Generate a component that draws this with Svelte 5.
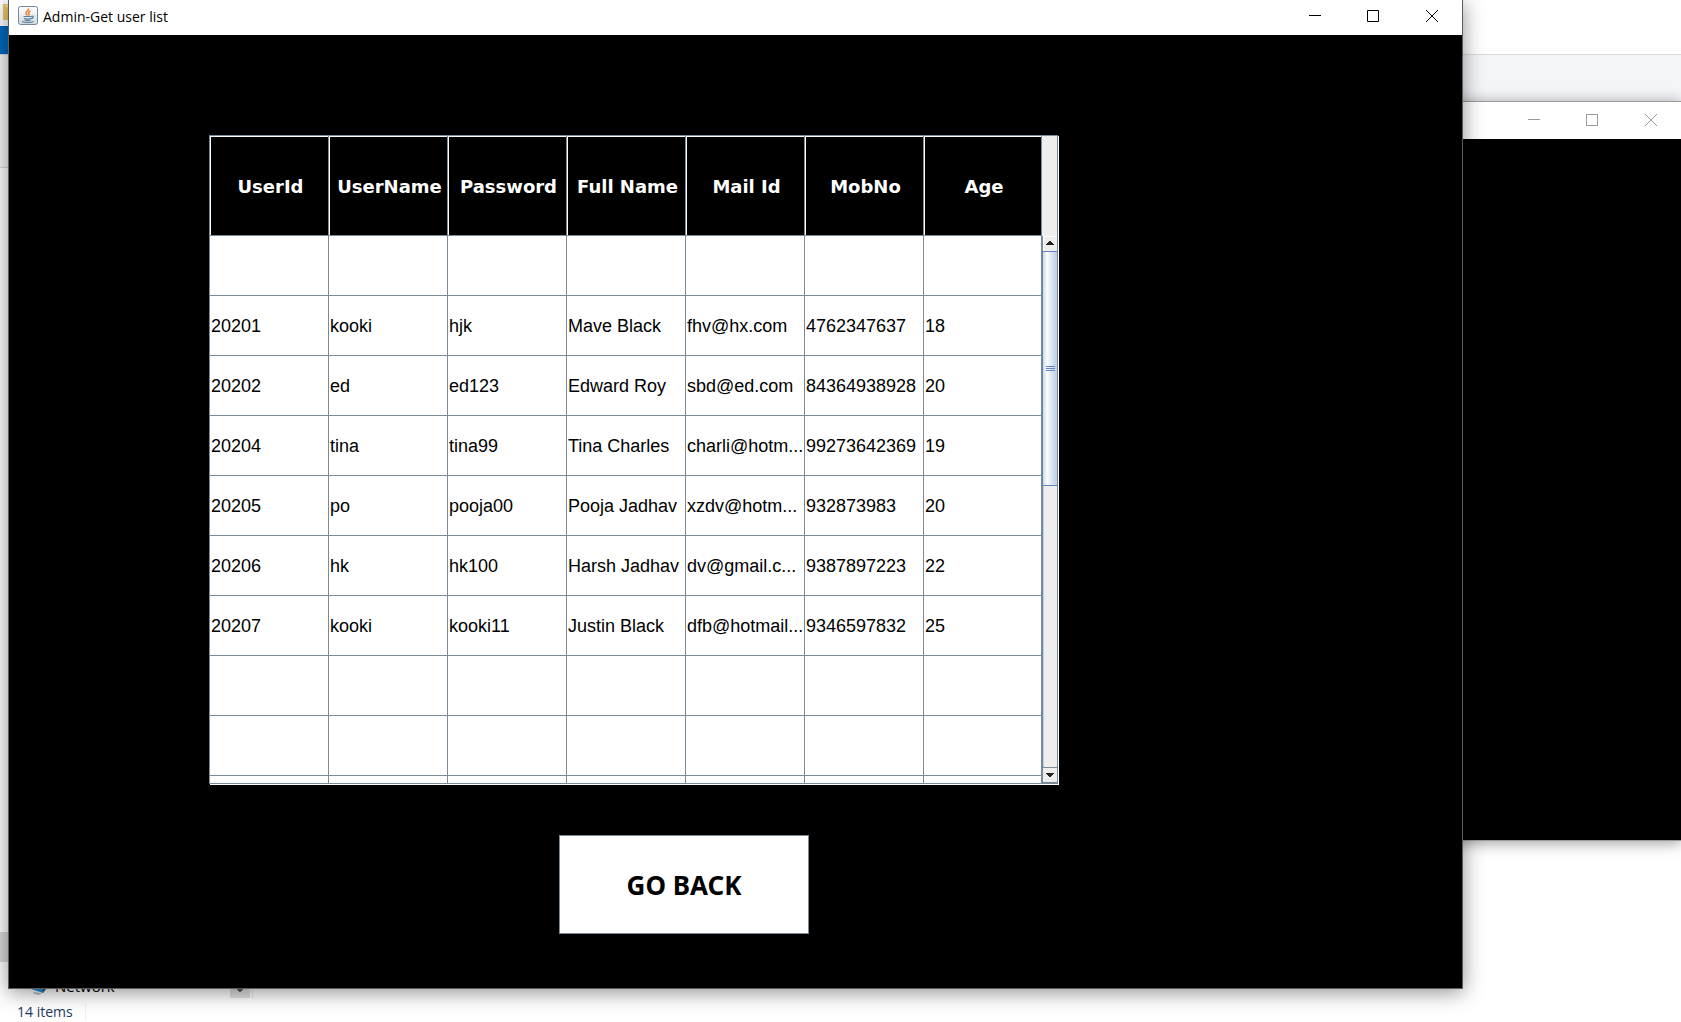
<script>
  const columns = ['UserId', 'UserName', 'Password', 'Full Name', 'Mail Id', 'MobNo', 'Age'];
  const blank = ['', '', '', '', '', '', ''];
  const rows = [
    blank,
    ['20201', 'kooki', 'hjk', 'Mave Black', 'fhv@hx.com', '4762347637', '18'],
    ['20202', 'ed', 'ed123', 'Edward Roy', 'sbd@ed.com', '84364938928', '20'],
    ['20204', 'tina', 'tina99', 'Tina Charles', 'charli@hotm...', '99273642369', '19'],
    ['20205', 'po', 'pooja00', 'Pooja Jadhav', 'xzdv@hotm...', '932873983', '20'],
    ['20206', 'hk', 'hk100', 'Harsh Jadhav', 'dv@gmail.c...', '9387897223', '22'],
    ['20207', 'kooki', 'kooki11', 'Justin Black', 'dfb@hotmail...', '9346597832', '25'],
    blank,
    blank,
    blank
  ];
</script>

{#snippet windowControls()}
  <div class="controls">
    <button type="button" aria-label="Minimize">
      <svg width="12" height="12" viewBox="0 0 12 12"><path d="M0 5.5h12" /></svg>
    </button>
    <button type="button" aria-label="Maximize">
      <svg width="12" height="12" viewBox="0 0 12 12"><path d="M.5 .5h11v11h-11z" /></svg>
    </button>
    <button type="button" class="close" aria-label="Close">
      <svg width="12" height="12" viewBox="0 0 12 12"><path d="M0 0l12 12M12 0L0 12" /></svg>
    </button>
  </div>
{/snippet}

<div class="desktop">
  <!-- File explorer behind the two application windows -->
  <div class="explorer">
    <div class="caption">
      <svg class="folder" width="16" height="18" viewBox="0 0 16 18">
        <path d="M0 1h6v16H0z" fill="#e8c766" /><path d="M2 2h14v13l-11 2V5z" fill="#f8e3a0" />
      </svg>
    </div>
    <div class="tabs"><span class="file-tab"></span></div>
    <div class="ribbon"><div class="ribbon-left"></div><div class="ribbon-right"></div></div>
    <div class="tree">
      <div class="selected"></div>
      <div class="network">
        <svg width="18" height="18" viewBox="0 0 18 18">
          <path d="M1 1l15 2v8l-3 5L1 12z" fill="#2b8fd8" /><path d="M12 4h4v8l-3 4z" fill="#3d5c73" />
          <path d="M3 15l9 1-3 2-5-1z" fill="#b9bec3" />
        </svg>
        <span>Network</span>
        <span class="scroll-end">
          <svg width="10" height="6" viewBox="0 0 10 6"><path d="M0 0l5 5 5-5" fill="none" stroke="#505050" stroke-width="2" /></svg>
        </span>
      </div>
    </div>
    <div class="status"><span>14 items</span></div>
  </div>

  <section class="window rear" aria-label="Background window">
    <header class="titlebar">{@render windowControls()}</header>
    <div class="rear-body"></div>
  </section>

  <main class="window front">
    <header class="titlebar">
      <svg class="java" width="20" height="19" viewBox="0 0 20 19">
        <defs>
          <linearGradient id="tile" x1="0" y1="0" x2="0" y2="1">
            <stop offset="0" stop-color="#fff" /><stop offset="1" stop-color="#d3d8dd" />
          </linearGradient>
        </defs>
        <rect x=".5" y=".5" width="19" height="18" rx="2" fill="url(#tile)" stroke="#7389a0" />
        <path d="M10.5 2.5c1 2-3.5 2.7-2.5 5 .3.8 1 1.300 1.500 2M12.500 5c-2 .8-2.500 1.700-1.600 2.700.5.700.3 1.300-.4 1.800" fill="none" stroke="#e8833a" stroke-width="1.5" />
        <path d="M5.500 10.500h8M6 12.300c2 .8 5.500.8 7.500 0M6.500 14c2 .6 4.500.6 6 0M13.500 10.300c2.500-.6 2.200 2-.5 2.600M4 15.500c2.500 1.300 9 1.300 11.500 0" fill="none" stroke="#5b82a3" stroke-width="1.2" />
      </svg>
      <h1>Admin-Get user list</h1>
      {@render windowControls()}
    </header>

    <div class="content">
      <div class="scroll-pane">
        <div class="viewport">
          <table>
            <thead>
              <tr>{#each columns as name}<th scope="col">{name}</th>{/each}</tr>
            </thead>
            <tbody>
              {#each rows as row}
                <tr>{#each row as cell}<td>{cell}</td>{/each}</tr>
              {/each}
            </tbody>
          </table>
        </div>
        <div class="side">
          <div class="corner"></div>
          <div class="scrollbar">
            <button type="button" class="arrow up" aria-label="Scroll up">
              <svg width="8" height="4" viewBox="0 0 8 4" shape-rendering="crispEdges"><path d="M3 0h2v1h1v1h1v1h1v1H0V3h1V2h1V1h1z" /></svg>
            </button>
            <div class="thumb"><i></i><i></i><i></i></div>
            <div class="track"></div>
            <button type="button" class="arrow down" aria-label="Scroll down">
              <svg width="8" height="4" viewBox="0 0 8 4" shape-rendering="crispEdges"><path d="M0 0h8v1H7v1H6v1H5v1H3V3H2V2H1V1H0z" /></svg>
            </button>
          </div>
        </div>
      </div>
      <button type="button" class="go-back">GO BACK</button>
    </div>
  </main>
</div>

<style>
  :global(body) {
    margin: 0;
  }

  .desktop,
  .desktop * {
    box-sizing: border-box;
  }

  .desktop {
    position: relative;
    min-height: 100vh;
    overflow: hidden;
    background: #fff;
    color: #000;
    font-family: 'Open Sans', 'Noto Sans', sans-serif;
  }

  button {
    margin: 0;
    padding: 0;
    border: 0;
    background: none;
    font: inherit;
    color: inherit;
  }

  svg {
    display: block;
    flex: none;
  }

  /* File explorer */
  .explorer {
    display: flex;
    flex-direction: column;
    min-height: 100vh;
  }

  .caption {
    height: 26px;
    padding: 3px;
  }

  .tabs {
    height: 29px;
    border-bottom: 1px solid #d9dbde;
  }

  .file-tab {
    display: block;
    width: 60px;
    height: 28px;
    background: #0069bd;
  }

  .ribbon {
    display: grid;
    grid-template-columns: 1fr 1fr;
    height: 113px;
    border-bottom: 1px solid #d5d7da;
  }

  .ribbon-left {
    background: #f4f5f8;
  }

  .ribbon-right {
    background: #f4f5f8;
  }

  .tree {
    flex: 1;
    display: flex;
    flex-direction: column;
    justify-content: flex-end;
  }

  .selected {
    width: 200px;
    height: 30px;
    background: #d9d9d9;
  }

  .network {
    display: flex;
    align-items: center;
    width: 253px;
    height: 36px;
    padding-left: 30px;
    gap: 7px;
    border-right: 1px solid #ececec;
    font-size: 15px;
    line-height: 20px;
  }

  .network > svg,
  .network > span {
    margin-top: 12px;
  }

  .network > .scroll-end {
    display: flex;
    align-items: flex-end;
    justify-content: center;
    align-self: stretch;
    width: 20px;
    margin: 0 2px 0 auto;
    padding-bottom: 6px;
    background: #e2e2e2;
  }

  .status {
    display: flex;
    height: 24px;
    padding: 5px 17px 1px;
    color: #1e395b;
    font-size: 14px;
    line-height: 18px;
  }

  .status span {
    padding-right: 12px;
    border-right: 1px solid #f0f0f0;
  }

  /* Application windows */
  .window {
    position: absolute;
    display: flex;
    flex-direction: column;
  }

  .rear {
    inset: 101px 0 181px 50%;
    border: 1px solid #9b9b9b;
    border-right: 0;
    box-shadow: 0 2px 14px rgba(0, 0, 0, 0.4);
    color: #999;
  }

  .rear .titlebar {
    height: 37px;
  }

  .rear-body {
    flex: 1;
    background: #000;
  }

  .front {
    inset: 0 218px 33px 8px;
    border: 1px solid #5c5c5c;
    border-top: 0;
    box-shadow: 0 3px 20px rgba(0, 0, 0, 0.45);
  }

  .titlebar {
    display: flex;
    align-items: center;
    height: 35px;
    padding-left: 9px;
    background: #fff;
  }

  .java {
    margin-bottom: 4px;
  }

  h1 {
    margin: 0 0 2px 5px;
    font-size: 14px;
    line-height: 20px;
    font-weight: 400;
  }

  .controls {
    display: flex;
    align-self: stretch;
    margin-left: auto;
    padding-bottom: 3px;
  }

  .rear .controls {
    padding-bottom: 1px;
  }

  .controls button {
    display: grid;
    place-items: center;
    width: 58px;
  }

  .controls .close {
    width: 60px;
  }

  .controls path {
    fill: none;
    stroke: currentColor;
  }

  .content {
    flex: 1;
    display: flex;
    flex-direction: column;
    align-items: flex-start;
    gap: 50px;
    padding: 100px 0 54px 200px;
    background: #000;
  }

  /* User table */
  .scroll-pane {
    display: grid;
    grid-template-columns: 832px 15px;
    height: 649px;
    margin: 0 1px 1px 0;
    border: 1px solid #7a8a99;
    background: #fff;
    box-shadow: 1px 1px 0 #fff;
  }

  .viewport {
    overflow: hidden;
  }

  table {
    width: 100%;
    table-layout: fixed;
    border-collapse: separate;
    border-spacing: 0;
  }

  th,
  td {
    border: 0 solid #7a8a99;
    border-width: 0 1px 1px 0;
    white-space: nowrap;
  }

  th:not(:last-child) {
    width: 119px;
  }

  th {
    height: 100px;
    padding: 3px 0 0 3px;
    background: #000;
    box-shadow: inset 1px 1px 0 #fff;
    color: #fff;
    font: bold 18px/24px 'DejaVu Sans', sans-serif;
    text-align: center;
  }

  td {
    height: 60px;
    padding: 0 0 0 1px;
    background: #fff;
    font: 18px/20px 'Liberation Sans', Arial, sans-serif;
  }

  .side {
    display: flex;
    flex-direction: column;
    min-height: 0;
  }

  .corner {
    height: 100px;
    background: #eee;
  }

  .scrollbar {
    flex: 1;
    display: flex;
    flex-direction: column;
    border-left: 1px solid #7a8a99;
    background: #eee;
  }

  .arrow {
    display: grid;
    place-items: center;
    height: 15px;
    border: 1px solid #fff;
    border-width: 1px 0 0 1px;
    background: #eee;
    fill: #222;
  }

  .up {
    padding: 0 1px 2px 0;
  }

  .thumb {
    display: flex;
    flex-direction: column;
    align-items: center;
    justify-content: center;
    gap: 1px;
    height: 235px;
    margin-left: -1px;
    border: 1px solid #6382bf;
    border-right: 0;
    background: linear-gradient(to right, #c8d8ea, #fff 30%, #dfe9f3 55%, #b8cfe5);
  }

  .thumb i {
    width: 9px;
    height: 1px;
    background: #6382bf;
  }

  .track {
    flex: 1;
    border-left: 1px solid #b8cfe5;
  }

  .down {
    height: 16px;
    border-width: 1px 0;
    border-color: #7a8a99;
  }

  .go-back {
    width: 250px;
    height: 99px;
    margin-left: 350px;
    border: 1px solid #7a8a99;
    background: #fff;
    font: bold 26px/32px 'Noto Sans', sans-serif;
  }
</style>
